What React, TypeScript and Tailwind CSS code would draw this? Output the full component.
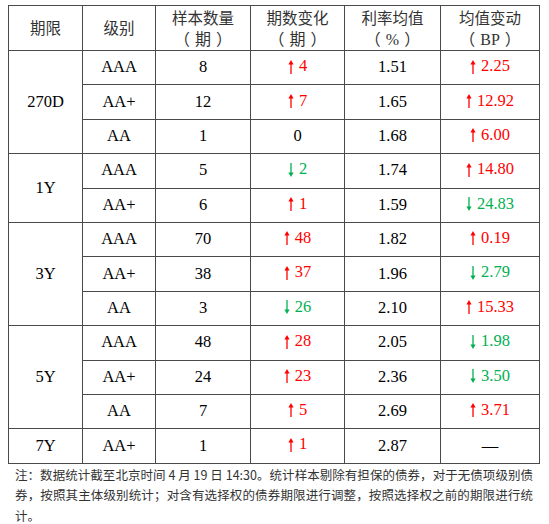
import React from "react";

type Row = { grade: string; n: string; chg: string; rate: string; bp: string };
type Group = { term: string; rows: Row[] };

const groups: Group[] = [
  {
    term: "270D",
    rows: [
      { grade: "AAA", n: "8", chg: "+4", rate: "1.51", bp: "+2.25" },
      { grade: "AA+", n: "12", chg: "+7", rate: "1.65", bp: "+12.92" },
      { grade: "AA", n: "1", chg: "0", rate: "1.68", bp: "+6.00" },
    ],
  },
  {
    term: "1Y",
    rows: [
      { grade: "AAA", n: "5", chg: "-2", rate: "1.74", bp: "+14.80" },
      { grade: "AA+", n: "6", chg: "+1", rate: "1.59", bp: "-24.83" },
    ],
  },
  {
    term: "3Y",
    rows: [
      { grade: "AAA", n: "70", chg: "+48", rate: "1.82", bp: "+0.19" },
      { grade: "AA+", n: "38", chg: "+37", rate: "1.96", bp: "-2.79" },
      { grade: "AA", n: "3", chg: "-26", rate: "2.10", bp: "+15.33" },
    ],
  },
  {
    term: "5Y",
    rows: [
      { grade: "AAA", n: "48", chg: "+28", rate: "2.05", bp: "-1.98" },
      { grade: "AA+", n: "24", chg: "+23", rate: "2.36", bp: "-3.50" },
      { grade: "AA", n: "7", chg: "+5", rate: "2.69", bp: "+3.71" },
    ],
  },
  {
    term: "7Y",
    rows: [{ grade: "AA+", n: "1", chg: "+1", rate: "2.87", bp: "none" }],
  },
];

function Arrow({ up }: { up: boolean }) {
  return (
    <svg width="6" height="14" viewBox="0 0 6 14" className="inline-block mr-[5px] align-[-1px]">
      {up ? (
        <>
          <line x1="3" y1="3" x2="3" y2="14" stroke="#ff0000" strokeWidth="1.3" />
          <path d="M3 0 L5.6 4.5 L0.4 4.5 Z" fill="#ff0000" />
        </>
      ) : (
        <>
          <line x1="3" y1="0" x2="3" y2="11" stroke="#00b050" strokeWidth="1.3" />
          <path d="M3 14 L5.6 9.5 L0.4 9.5 Z" fill="#00b050" />
        </>
      )}
    </svg>
  );
}

function Val({ v }: { v: string }) {
  if (v === "none") return <span className="text-black">—</span>;
  if (v.startsWith("+"))
    return (
      <span className="text-[#ff0000] inline-flex items-center">
        <Arrow up />
        {v.slice(1)}
      </span>
    );
  if (v.startsWith("-"))
    return (
      <span className="text-[#00b050] inline-flex items-center">
        <Arrow up={false} />
        {v.slice(1)}
      </span>
    );
  return <span className="text-black">{v}</span>;
}

const serif = "font-['Liberation_Serif','Noto_Sans_CJK_SC',serif]";
const cjk = "font-['Noto_Sans_CJK_SC',sans-serif]";
const td = "border border-[#4a4a4a] text-center align-middle p-0";

export default function App() {
  return (
    <div className="w-[549px] h-[524px] bg-white pt-[5px] pl-[8px]">
      <table className={`border-collapse ${serif} text-[16.5px] text-black table-fixed w-[531px]`}>
        <colgroup>
          <col className="w-[74px]" />
          <col className="w-[73px]" />
          <col className="w-[95px]" />
          <col className="w-[94px]" />
          <col className="w-[96px]" />
          <col className="w-[99px]" />
        </colgroup>
        <thead>
          <tr className="h-[45px]">
            {["期限", "级别"].map((h) => (
              <th key={h} className={`${td} ${cjk} font-normal text-[15.5px] text-[#333]`}>
                {h}
              </th>
            ))}
            {[
              ["样本数量", "期"],
              ["期数变化", "期"],
              ["利率均值", "%"],
              ["均值变动", "BP"],
            ].map(([a, b]) => (
              <th key={a} className={`${td} font-normal text-[15.5px] leading-[21px] text-[#333]`}>
                <div className={cjk}>{a}</div>
                <div className={`${serif} text-[16px]`}>
                  <span className={`${cjk} mr-[5px]`}>（</span>
                  {b}
                  <span className={`${cjk} ml-[5px]`}>）</span>
                </div>
              </th>
            ))}
          </tr>
        </thead>
        <tbody>
          {groups.map((g) =>
            g.rows.map((r, i) => (
              <tr key={g.term + r.grade} className="h-[34.4px]">
                {i === 0 && (
                  <td rowSpan={g.rows.length} className={td}>
                    {g.term}
                  </td>
                )}
                <td className={td}>{r.grade}</td>
                <td className={td}>{r.n}</td>
                <td className={td}>
                  <Val v={r.chg} />
                </td>
                <td className={td}>{r.rate}</td>
                <td className={td}>
                  <Val v={r.bp} />
                </td>
              </tr>
            ))
          )}
        </tbody>
      </table>
      <div className={`${cjk} text-[12.5px] leading-[20.5px] text-[#333] pl-[7px] w-[525px] mt-[1px]`}>
        <div className="text-justify [text-align-last:justify]">
          注：数据统计截至北京时间 4 月 19 日 14:30。统计样本剔除有担保的债券，对于无债项级别债
        </div>
        <div className="text-justify [text-align-last:justify]">
          券，按照其主体级别统计；对含有选择权的债券期限进行调整，按照选择权之前的期限进行统
        </div>
        <div>计。</div>
      </div>
    </div>
  );
}
